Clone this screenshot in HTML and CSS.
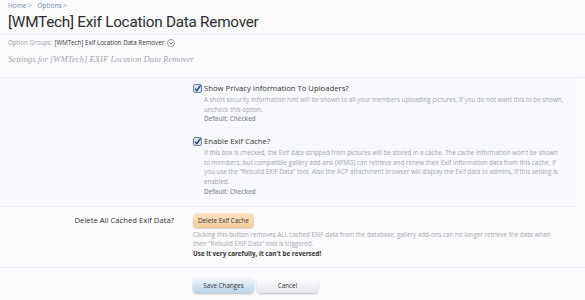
FILE: index.html
```html
<!DOCTYPE html>
<html>
<head>
<meta charset="utf-8">
<link rel="stylesheet" href="styles.css">
</head>
<body>
<div class="top">
  <div class="crumbs"><a>Home</a> <span class="sep">&gt;</span> <a>Options</a> <span class="sep">&gt;</span></div>
  <h1 class="title">[WMTech] Exif Location Data Remover</h1>
</div>
<div class="groups">
  <span class="glabel">Option Groups:</span> <span class="gname">[WMTech] Exif Location Data Remover</span>
  <span class="gicon"><svg width="8" height="8" viewBox="0 0 8 8"><circle cx="4" cy="4" r="3.5" fill="#fff" stroke="#888" stroke-width="0.8"/><path d="M2.3 3.2 L4 5 L5.7 3.2" fill="none" stroke="#555" stroke-width="0.9"/></svg></span>
</div>
<div class="desc">Settings for [WMTech] EXIF Location Data Remover</div>

<div class="form">
  <div class="block checks">
    <div class="row">
      <div class="lbl"></div>
      <div class="ctl">
        <label class="chk"><span class="box"><svg width="9" height="9" viewBox="0 0 9 9"><rect x="0.5" y="0.5" width="8" height="8" rx="1.5" fill="#d7e3f3" stroke="#6a83a8"/><path d="M2 4.6 L3.8 6.6 L7.6 1.4" fill="none" stroke="#1f3d78" stroke-width="1.4"/></svg></span>Show Privacy Information To Uploaders?</label>
        <p class="hint">A short security information hint will be shown to all your members uploading pictures. If you do not want this to be shown, uncheck this option.</p>
        <p class="def">Default: Checked</p>
      </div>
    </div>
    <div class="row second">
      <div class="lbl"></div>
      <div class="ctl">
        <label class="chk"><span class="box"><svg width="9" height="9" viewBox="0 0 9 9"><rect x="0.5" y="0.5" width="8" height="8" rx="1.5" fill="#d7e3f3" stroke="#6a83a8"/><path d="M2 4.6 L3.8 6.6 L7.6 1.4" fill="none" stroke="#1f3d78" stroke-width="1.4"/></svg></span>Enable Exif Cache?</label>
        <p class="hint">If this box is checked, the Exif data stripped from pictures will be stored in a cache. The cache information won't be shown to&nbsp;members, but compatible gallery add-ons (XFMG) can retrieve and renew their Exif information data from this cache, if you&nbsp;use the "Rebuild EXIF Data" tool. Also the ACP attachment browser will display the Exif data to admins, if this setting is enabled.</p>
        <p class="def">Default: Checked</p>
      </div>
    </div>
  </div>
  <div class="block del">
    <div class="row">
      <div class="lbl">Delete All Cached Exif Data?</div>
      <div class="ctl flat">
        <button class="btn orange">Delete Exif Cache</button>
        <p class="hint narrow">Clicking this button removes ALL cached EXIF data from the database, gallery add-ons can no longer retrieve the data when<br>their "Rebuild EXIF Data" tool is triggered.</p>
        <p class="warn">Use it very carefully, it can't be reversed!</p>
      </div>
    </div>
  </div>
  <div class="submit">
    <div class="lbl"></div>
    <div class="btns">
      <button class="btn blue">Save Changes</button>
      <button class="btn grey">Cancel</button>
    </div>
  </div>
</div>
</body>
</html>
```
FILE: styles.css
```css
* { box-sizing: border-box; }
body {
  margin: 0;
  background: #fbfbfd;
  font-family: "Open Sans", "DejaVu Sans", sans-serif;
  color: #333;
  width: 585px;
  height: 300px;
  overflow: hidden;
}
.top {
  padding: 1px 8px 0 8px;
  border-bottom: 1px solid #eef1f6;
  height: 35px;
}
.crumbs {
  font-size: 6.5px;
  line-height: 9px;
  color: #6a8cb0;
}
.crumbs .sep { color: #7a8ea4; margin-right: 4px; }
.title {
  margin: 2px 0 0 0;
  font-family: "Roboto", "Open Sans", sans-serif;
  font-weight: normal;
  font-size: 15.3px;
  line-height: 20px;
  color: #2c2c2c;
  letter-spacing: -0.25px;
}
.groups {
  padding: 3px 8px 0 8px;
  font-size: 6.2px;
  line-height: 10px;
  display: flex;
  align-items: center;
  gap: 2px;
}
.glabel { color: #9aa0a8; }
.gname { color: #333; }
.gicon { display: flex; margin-left: 1px; }
.desc {
  padding: 5px 8px 0 8px;
  font-family: "Liberation Serif", "DejaVu Serif", serif;
  font-style: italic;
  font-size: 8.7px;
  line-height: 12px;
  color: #a2a6ac;
  height: 29px;
}
.form {
  border-top: 1px solid #e7eef6;
}
.block.checks {
  background: #f8f9fc;
  width: 576px;
  padding: 5px 0 9px 0;
  border-bottom: 1px solid #eef0f4;
}
.row {
  display: grid;
  grid-template-columns: 193px 1fr;
}
.row.second { margin-top: 12px; }
.ctl { padding-left: 11px; padding-right: 7px; }
.ctl.flat { padding-left: 0; }
.chk {
  display: flex;
  align-items: center;
  font-size: 7.7px;
  line-height: 11px;
  color: #333;
  margin-left: -11px;
}
.box { display: flex; width: 11px; }
.hint {
  margin: 1px 0 0 0;
  font-size: 6.25px;
  line-height: 9.6px;
  color: #a2a6ab;
}
.hint.narrow { margin-top: 2px; }
.def {
  margin: 0;
  font-size: 6.3px;
  line-height: 10px;
  font-weight: 600;
  color: #8d9197;
}
.block.del { padding: 6px 0 8px 0; border-bottom: 1px solid #e6eef4; }
.del .lbl {
  text-align: right;
  padding-right: 19px;
  font-size: 7.7px;
  line-height: 12px;
  padding-top: 1px;
  color: #333;
}
.warn {
  margin: 0;
  font-size: 6.3px;
  line-height: 10px;
  font-weight: 700;
  color: #333;
}
.btn {
  display: block;
  font-family: inherit;
  font-size: 6.3px;
  line-height: 15px;
  height: 15px;
  padding: 0 5px;
  border-radius: 4px;
  border: none;
  color: #333;
}
.btn.orange {
  background: linear-gradient(#fbe5c8, #f4c995);
  box-shadow: 0 1px 1px rgba(0,0,0,0.15);
}
.submit {
  display: grid;
  grid-template-columns: 193px 1fr;
  padding-top: 10px;
}
.btns { display: flex; gap: 3px; }
.btn.blue {
  width: 61px;
  background: linear-gradient(#f1f6fb, #b9d3ea);
  box-shadow: 0 1px 2px rgba(0,0,0,0.25);
}
.btn.grey {
  width: 61px;
  background: linear-gradient(#ffffff, #e3e6ec);
  box-shadow: 0 1px 2px rgba(0,0,0,0.25);
}
```
